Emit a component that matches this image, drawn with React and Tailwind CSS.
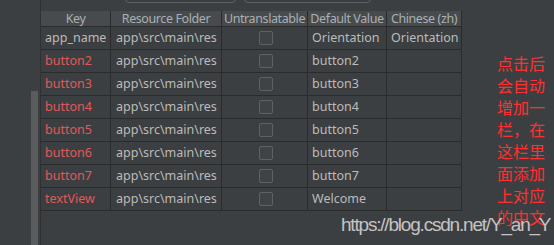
import React from "react";

const rows = [
  { key: "app_name", red: false, dv: "Orientation", zh: "Orientation" },
  { key: "button2", red: true, dv: "button2", zh: "" },
  { key: "button3", red: true, dv: "button3", zh: "" },
  { key: "button4", red: true, dv: "button4", zh: "" },
  { key: "button5", red: true, dv: "button5", zh: "" },
  { key: "button6", red: true, dv: "button6", zh: "" },
  { key: "button7", red: true, dv: "button7", zh: "" },
  { key: "textView", red: true, dv: "Welcome", zh: "" },
];

const note = ["点击后", "会自动", "增加一", "栏，在", "这栏里", "面添加", "上对应", "的中文"];

export default function App() {
  return (
    <div
      className="relative flex w-[554px] h-[245px] overflow-hidden bg-[#3c3f41] text-[12.5px] text-[#bbbbbb]"
      style={{ fontFamily: '"Noto Sans", "Noto Sans CJK SC", sans-serif' }}
    >
      {/* left panel */}
      <div className="relative w-[41px] shrink-0 border-r border-[#2f3133] bg-[#3c3f41]">
        <div className="absolute left-[31px] top-[91px] w-[7px] h-[160px] bg-[#595b5d]" />
      </div>

      {/* main */}
      <div className="flex flex-col flex-1">
        {/* top buttons (cut off) */}
        <div className="h-[11px] relative">
          <div className="absolute left-[84px] top-[-20px] w-[111px] h-[23px] rounded-[4px] border border-[#5e6163]" />
          <div className="absolute left-[203px] top-[-20px] w-[127px] h-[23px] rounded-[4px] border border-[#5e6163]" />
        </div>

        {/* table */}
        <div className="grid grid-cols-[69px_110px_85px_78px_74px] gap-px bg-[#2b2b2b] w-[421px] border-r border-b border-[#2b2b2b]">
          {["Key", "Resource Folder", "Untranslatable", "Default Value", "Chinese (zh)"].map((h) => (
            <div
              key={h}
              className="h-[15px] leading-[15px] bg-[#474b4d] text-center whitespace-nowrap overflow-hidden text-[#a9b0b5] text-[12.5px] tracking-[-0.4px]"
            >
              {h}
            </div>
          ))}
          {rows.map((r) => (
            <React.Fragment key={r.key}>
              <div className={`h-[22px] leading-[22px] pl-[4px] bg-[#3c3f41] whitespace-nowrap ${r.red ? "text-[#e0595a]" : "text-[#bbbbbb]"}`}>
                {r.key}
              </div>
              <div className="h-[22px] leading-[22px] pl-[5px] bg-[#3c3f41] whitespace-nowrap">app\src\main\res</div>
              <div className="h-[22px] flex items-center justify-center bg-[#3c3f41]">
                <div className="w-[14px] h-[14px] rounded-[2px] border border-[#5f6265] bg-[#404346] ml-[2px]" />
              </div>
              <div className="h-[22px] leading-[22px] pl-[4px] bg-[#3c3f41] whitespace-nowrap">{r.dv}</div>
              <div className="h-[22px] leading-[22px] pl-[4px] bg-[#3c3f41] whitespace-nowrap">{r.zh}</div>
            </React.Fragment>
          ))}
        </div>
      </div>

      {/* annotation */}
      <div
        className="absolute left-[497px] top-[52px] text-[16px] leading-[22px] text-[#ff3030]"
        style={{ fontFamily: '"Noto Sans CJK SC", sans-serif' }}
      >
        {note.map((n) => (
          <div key={n}>{n}</div>
        ))}
      </div>

      {/* watermark */}
      <div
        className="absolute left-[341px] top-[213px] text-[19px] leading-[24px] tracking-[-1.2px] text-[#c4c4c4] whitespace-nowrap"
        style={{ fontFamily: '"Liberation Sans", Arial, sans-serif' }}
      >
        https://blog.csdn.net/Y_an_Y
      </div>
    </div>
  );
}
